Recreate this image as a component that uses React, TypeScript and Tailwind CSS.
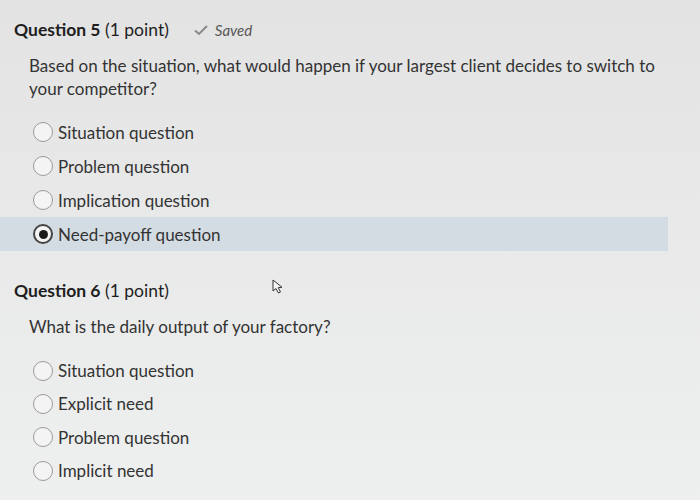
import React from "react";

function Radio({ checked }: { checked?: boolean }) {
  return (
    <span
      className={`flex h-[20px] w-[20px] shrink-0 items-center justify-center rounded-full bg-[#f4f4f4] ${
        checked ? "border-2 border-[#444]" : "border-[1.5px] border-[#9a9a9a]"
      }`}
    >
      {checked && <span className="h-[9px] w-[9px] rounded-full bg-[#1a1a1a]" />}
    </span>
  );
}

function Option({ label, checked, tall }: { label: string; checked?: boolean; tall?: boolean }) {
  return (
    <div
      className={`flex items-center gap-[5px] pl-[33px] ${tall ? "h-[34px]" : "h-[33.4px]"} ${
        checked ? "bg-[#d3dce2]" : ""
      }`}
    >
      <Radio checked={checked} />
      <span className="text-[17px] text-[#333]">{label}</span>
    </div>
  );
}

export default function App() {
  return (
    <div
      className="relative h-[500px] w-[700px] overflow-hidden bg-gradient-to-b from-[#e3e3e3] to-[#eef0ef]"
      style={{ fontFamily: "Lato, 'Open Sans', sans-serif" }}
    >
      <div className="flex items-center pl-[14px] pt-[17px]">
        <span className="text-[17.5px] text-[#1e1e1e]">
          <span className="font-bold">Question 5</span> (1 point)
        </span>
        <span className="ml-[24px] flex items-center gap-[6px] text-[15px] italic text-[#555]">
          <svg width="16" height="12" viewBox="0 0 16 12">
            <path d="M2 6.5 L6 10 L14 2" fill="none" stroke="#8a8a8a" strokeWidth="2" />
          </svg>
          Saved
        </span>
      </div>
      <div className="mt-[11px] w-[660px] pl-[29px] text-[17px] leading-[23px] text-[#333]">
        Based on the situation, what would happen if your largest client decides to switch to your competitor?
      </div>
      <div className="mt-[15px] flex w-[668px] flex-col">
        <Option label="Situation question" tall />
        <Option label="Problem question" tall />
        <Option label="Implication question" tall />
        <Option label="Need-payoff question" checked tall />
      </div>
      <div className="mt-[27px] pl-[14px] text-[17.5px] text-[#1e1e1e]">
        <span className="font-bold">Question 6</span> (1 point)
      </div>
      <div className="mt-[9px] pl-[29px] text-[17px] text-[#333]">What is the daily output of your factory?</div>
      <div className="mt-[15px] flex w-[668px] flex-col">
        <Option label="Situation question" />
        <Option label="Explicit need" />
        <Option label="Problem question" />
        <Option label="Implicit need" />
      </div>
      <svg className="absolute left-[272px] top-[279px]" width="14" height="16" viewBox="0 0 14 16">
        <path d="M1 1 L1 12 L4 9.5 L6.5 14 L8.5 13 L6.2 8.6 L10 8.3 Z" fill="#f7f7f7" stroke="#333" strokeWidth="1" />
      </svg>
    </div>
  );
}
